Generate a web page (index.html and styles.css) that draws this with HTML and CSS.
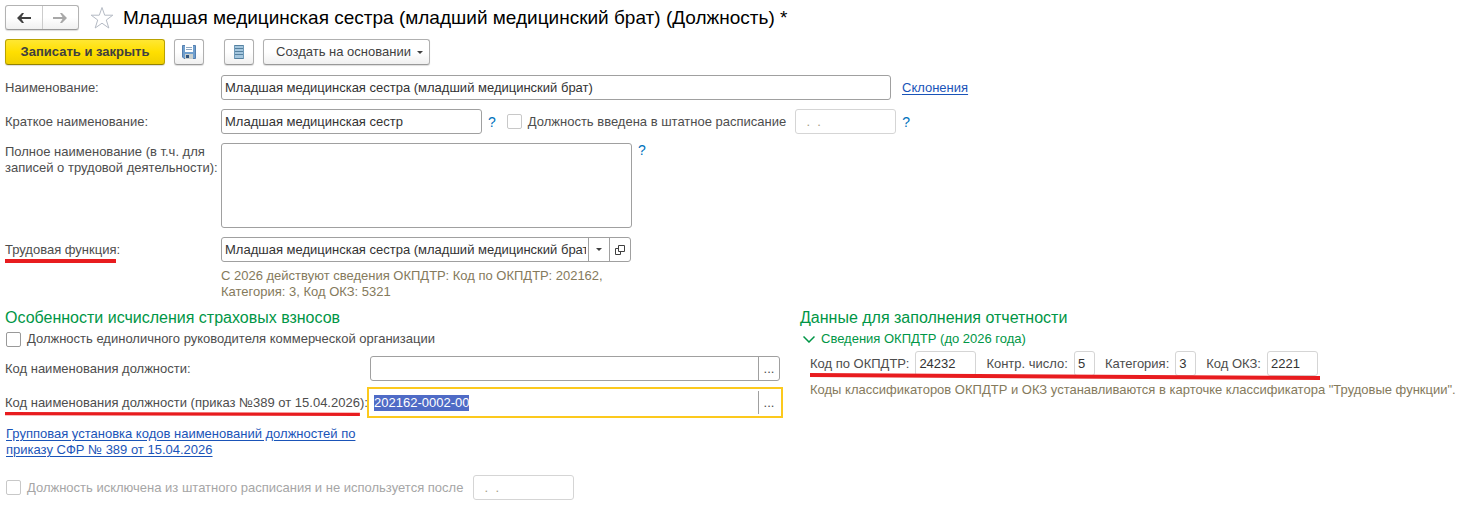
FILE: index.html
```html
<!DOCTYPE html>
<html lang="ru">
<head>
    <meta charset="UTF-8">
    <meta name="viewport" content="width=device-width, initial-scale=1.0">
    <title>Младшая медицинская сестра (младший медицинский брат) (Должность) *</title>
    <link rel="stylesheet" href="styles.css">
</head>
<body>
    <header class="title-bar">
        <div class="nav-buttons">
            <button type="button" class="nav-btn" aria-label="Назад">
                <svg width="14" height="10" viewBox="0 0 14 10"><path d="M0 5 5 0h2L4.500 4H14v2H4.500L7 10H5z" fill="#404040"/></svg>
            </button>
            <button type="button" class="nav-btn" aria-label="Вперед">
                <svg width="14" height="10" viewBox="0 0 14 10"><path d="M14 5 9 0H7l2.500 4H0v2h9.500L7 10h2z" fill="#a8a8a8"/></svg>
            </button>
        </div>
        <button type="button" class="star-btn" aria-label="В избранное">
            <svg width="24" height="24" viewBox="0 0 24 24"><path d="M12 1.500 14.700 9.200H22.800L16.300 14 18.800 22 12 17.200 5.200 22 7.700 14 1.200 9.200H9.300Z" fill="#fff" stroke="#b4bac4" stroke-width="1"/></svg>
        </button>
        <h1>Младшая медицинская сестра (младший медицинский брат) (Должность) *</h1>
    </header>

    <div class="toolbar">
        <button type="button" class="btn btn-primary">Записать и закрыть</button>
        <button type="button" class="btn btn-icon" aria-label="Записать">
            <svg width="14" height="14" viewBox="0 0 14 14">
                <path d="M.5.500h13v13H2L.5 12z" fill="#6f9fce" stroke="#5580b0"/>
                <path d="M3 0h8v7H3z" fill="#fff"/>
                <path d="M4 2.500h6M4 4.500h6" stroke="#8da6c0"/>
                <path d="M3 9h8v5H3z" fill="#c9d0cf"/>
                <path d="M4 10h3v3H4z" fill="#31557f"/>
            </svg>
        </button>
        <button type="button" class="btn btn-icon btn-list" aria-label="Список">
            <svg width="10" height="14" viewBox="0 0 10 14">
                <path d="M0 0h10v14H0z" fill="#a4c6de"/>
                <path d="M0 .5h10M0 3.500h10M0 6.500h10M0 9.500h10M0 13.500h10" stroke="#56819f"/>
                <path d="M.5 0v14M9.500 0v14" stroke="#6f9ab8"/>
            </svg>
        </button>
        <button type="button" class="btn btn-menu">Создать на основании
            <svg width="6" height="3" viewBox="0 0 6 3"><path d="M0 0h6L3 3z" fill="#404040"/></svg>
        </button>
    </div>

    <form class="form">
        <div class="row">
            <label class="label" for="name">Наименование:</label>
            <input type="text" id="name" class="input input-name" value="Младшая медицинская сестра (младший медицинский брат)">
            <a href="#" class="link link-cases">Склонения</a>
        </div>
        <div class="row">
            <label class="label" for="shortName">Краткое наименование:</label>
            <input type="text" id="shortName" class="input input-short" value="Младшая медицинская сестр">
            <a href="#" class="help">?</a>
            <input type="checkbox" id="inStaff" class="check check-staff" disabled>
            <label for="inStaff" class="check-label">Должность введена в штатное расписание</label>
            <input type="text" class="input input-date" value="  .  ." aria-label="Дата введения" disabled>
            <a href="#" class="help">?</a>
        </div>
        <div class="row row-top">
            <label class="label" for="fullName">Полное наименование (в т.ч. для записей о трудовой деятельности):</label>
            <textarea id="fullName" class="input textarea"></textarea>
            <a href="#" class="help">?</a>
        </div>
        <div class="row">
            <label class="label" for="func"><span class="marked">Трудовая функция<svg class="mark" viewBox="0 0 108 4" preserveAspectRatio="none"><path d="M0 0h108v4H0z"/></svg></span>:</label>
            <div class="combo combo-func">
                <input type="text" id="func" class="combo-input" value="Младшая медицинская сестра (младший медицинский брат)">
                <button type="button" class="combo-btn" aria-label="Выбрать">
                    <svg width="6" height="3" viewBox="0 0 6 3"><path d="M0 0h6L3 3z" fill="#404040"/></svg>
                </button>
                <button type="button" class="combo-btn" aria-label="Открыть">
                    <svg width="10" height="10" viewBox="0 0 10 10"><path d="M3.500.500h6v6h-6zM3.500 3.500h-3v6h5v-3" fill="none" stroke="#404040"/></svg>
                </button>
            </div>
        </div>
        <p class="hint">С 2026 действуют сведения ОКПДТР: Код по ОКПДТР: 202162, Категория: 3, Код ОКЗ: 5321</p>

        <div class="columns">
            <section class="insurance">
                <h2>Особенности исчисления страховых взносов</h2>
                <div class="check-row">
                    <input type="checkbox" id="head" class="check">
                    <label for="head">Должность единоличного руководителя коммерческой организации</label>
                </div>
                <div class="code-row">
                    <label for="code">Код наименования должности:</label>
                    <div class="combo">
                        <input type="text" id="code" class="combo-input">
                        <button type="button" class="combo-btn" aria-label="Выбрать код">...</button>
                    </div>
                </div>
                <div class="code-row">
                    <label for="code389"><span class="marked">Код наименования должности (приказ №389 от 15.04.2026<svg class="mark" viewBox="0 0 352 5" preserveAspectRatio="none"><path d="M0 0 352 1v4L0 4z"/></svg></span>):</label>
                    <div class="combo combo-active">
                        <input type="text" id="code389" class="combo-input" value="202162-0002-00" autofocus>
                        <button type="button" class="combo-btn" aria-label="Выбрать код">...</button>
                    </div>
                </div>
                <a href="#" class="link link-group">Групповая установка кодов наименований должностей по приказу СФР № 389 от 15.04.2026</a>
            </section>

            <section class="report">
                <h2>Данные для заполнения отчетности</h2>
                <button type="button" class="toggle" aria-expanded="true">
                    <svg width="12" height="7" viewBox="0 0 12 7"><path d="M.5.500 6 6 11.500.500" fill="none" stroke="#009646" stroke-width="1.500"/></svg>
                    Сведения ОКПДТР (до 2026 года)
                </button>
                <div class="okpdtr">
                    <label for="okpdtr">Код по ОКПДТР:</label>
                    <input type="text" id="okpdtr" class="input input-ro w-code" value="24232" readonly>
                    <label for="ctrl">Контр. число:</label>
                    <input type="text" id="ctrl" class="input input-ro w-digit" value="5" readonly>
                    <label for="cat">Категория:</label>
                    <input type="text" id="cat" class="input input-ro w-digit" value="3" readonly>
                    <label for="okz">Код ОКЗ:</label>
                    <input type="text" id="okz" class="input input-ro w-okz" value="2221" readonly>
                    <svg class="mark" viewBox="0 0 510 7" preserveAspectRatio="none"><path d="M0 0 510 3v4L0 4z"/></svg>
                </div>
                <p class="note">Коды классификаторов ОКПДТР и ОКЗ устанавливаются в карточке классификатора "Трудовые функции".</p>
            </section>
        </div>

        <div class="check-row excluded">
            <input type="checkbox" id="excluded" class="check" disabled>
            <label for="excluded">Должность исключена из штатного расписания и не используется после</label>
            <input type="text" class="input input-date" value="  .  ." aria-label="Дата исключения" disabled>
        </div>
    </form>

    <script>
        const activeCode = document.getElementById('code389');
        activeCode.focus();
        activeCode.select();
    </script>
</body>
</html>
```
FILE: styles.css
```css
* {
    box-sizing: border-box;
}
body {
    margin: 0;
    padding: 5px;
    background: #fff;
    color: #4d4d4d;
    font-family: "Liberation Sans", Arial, sans-serif;
    font-size: 13px;
    line-height: 16px;
}
button, input, textarea {
    font: inherit;
    color: inherit;
    margin: 0;
}
button {
    cursor: pointer;
}
svg {
    display: block;
    flex: none;
}
h1, h2, p {
    margin: 0;
    font-weight: normal;
}
h1 {
    margin-left: 9px;
    color: #000;
    font-size: 19px;
    line-height: 24px;
}
h2 {
    color: #009646;
    font-size: 16px;
    line-height: 18px;
}

/* title */
.title-bar {
    display: flex;
    align-items: center;
    height: 25px;
}
.nav-buttons {
    display: flex;
    width: 74px;
    height: 25px;
    border: 1px solid #b3b3b3;
    border-bottom-color: #999;
    border-radius: 3px;
    background: linear-gradient(#fff 50%, #f0f0f0);
    box-shadow: 0 1px 1px #ddd;
}
.nav-btn {
    display: flex;
    flex: 1;
    align-items: center;
    justify-content: center;
    padding: 0;
    border: 0;
    background: none;
}
.nav-btn + .nav-btn {
    border-left: 1px solid #ccc;
}
.star-btn {
    margin-left: 11px;
    padding: 0;
    border: 0;
    background: none;
}

/* toolbar */
.toolbar {
    display: flex;
    gap: 9px;
    margin-top: 9px;
}
.btn {
    display: flex;
    align-items: center;
    justify-content: center;
    height: 26px;
    padding: 0 13px;
    border: 1px solid #b0b0b0;
    border-bottom-color: #999;
    border-radius: 3px;
    background: linear-gradient(#fff 50%, #f0f0f0);
    box-shadow: 0 1px 1px #ddd;
    color: #404040;
}
.btn-primary {
    width: 160px;
    border-color: #b9a200;
    border-bottom-color: #948200;
    background: linear-gradient(#ffe733, #ffdf00 50%, #f0d000);
    font-weight: bold;
}
.btn-icon {
    width: 30px;
    padding: 0;
}
.btn-list {
    margin-left: 11px;
}
.btn-menu {
    gap: 6px;
    width: 167px;
    padding: 0 6px 0 12px;
}

/* fields */
.form {
    margin-top: 10px;
}
.row {
    display: flex;
    align-items: center;
    margin-bottom: 9px;
}
.row-top {
    align-items: flex-start;
}
.label {
    flex: none;
    width: 216px;
}
.input {
    height: 25px;
    padding: 0 3px;
    border: 1px solid #a0a0a0;
    border-radius: 3px;
    background: #fff;
    color: #333;
    outline: none;
}
.input-name {
    width: 670px;
}
.input-short {
    width: 261px;
}
.textarea {
    width: 411px;
    height: 85px;
    resize: none;
}
.input-date {
    width: 101px;
    margin-left: 9px;
    border-color: #d5d5d5;
    color: #a59d85;
    white-space: pre;
}
.row-top .label {
    padding-top: 1px;
}
.link {
    color: #1a54b8;
    text-underline-offset: 2px;
}
.link-cases {
    margin-left: 11px;
}
.help {
    margin-left: 6px;
    color: #0072bc;
    font-size: 14px;
    line-height: 14px;
    text-decoration: none;
}
.check {
    flex: none;
    width: 15px;
    height: 15px;
    appearance: none;
    border: 1px solid #999;
    border-radius: 2px;
    background: #fff;
}
.check:disabled {
    border-color: #c8c8c8;
}
.check-staff {
    margin-left: 11px;
}
.check-label {
    margin-left: 6px;
}

/* field with buttons */
.combo {
    display: flex;
    width: 410px;
    height: 25px;
    border: 1px solid #a0a0a0;
    border-radius: 3px;
    background: #fff;
}
.combo-input {
    flex: 1;
    min-width: 0;
    padding: 0 0 0 3px;
    border: 0;
    background: none;
    color: #333;
    outline: none;
}
.combo-input::selection {
    background: #4f6bc6;
    color: #fff;
}
.combo-btn {
    display: flex;
    align-items: center;
    justify-content: center;
    width: 21px;
    padding: 0;
    border: 0;
    border-left: 1px solid #a0a0a0;
    background: none;
}
.combo-func .combo-input {
    margin-right: 2px;
}
.combo-active {
    border-color: #fff;
    border-radius: 0;
    outline: 2px solid #fcc91d;
    outline-offset: 1px;
}
.hint {
    width: 400px;
    margin: -4px 0 0 216px;
    color: #857a5c;
}
.row:has(+ .hint) {
    margin-bottom: 10px;
}

/* red underline drawn over a caption */
.marked {
    position: relative;
}
.mark {
    position: absolute;
    left: 0;
    bottom: -6px;
    width: 100%;
    height: 4px;
    fill: #e81c1f;
}

/* lower part */
.columns {
    display: grid;
    grid-template-columns: 775fr 668fr;
    gap: 20px;
    margin-top: 9px;
}
.check-row {
    display: flex;
    align-items: center;
    gap: 6px;
    padding-left: 1px;
}
.insurance .check-row {
    margin: 4px 0 9px;
}
.code-row {
    display: flex;
    align-items: center;
    justify-content: space-between;
    margin-bottom: 9px;
}
.link-group {
    display: block;
    width: 360px;
    margin: 11px 0 0 1px;
}
.toggle {
    display: flex;
    align-items: center;
    gap: 6px;
    margin: 4px 0 4px 3px;
    padding: 0;
    border: 0;
    background: none;
    color: #009646;
}
.okpdtr {
    display: flex;
    align-items: center;
    gap: 6px;
    position: relative;
    width: 510px;
    margin-left: 10px;
}
.okpdtr label:not(:first-child) {
    margin-left: 4px;
}
.okpdtr .mark {
    bottom: -4px;
    height: 7px;
}
.input-ro {
    border-color: #d5d5d5;
}
.w-code {
    width: 61px;
}
.w-digit {
    width: 21px;
}
.w-okz {
    width: 51px;
}
.note {
    margin: 6px 0 0 10px;
    color: #857a5c;
}
.excluded {
    margin-top: 17px;
    color: #a6a6a6;
}
.excluded .input-date {
    margin-left: 4px;
}
```
